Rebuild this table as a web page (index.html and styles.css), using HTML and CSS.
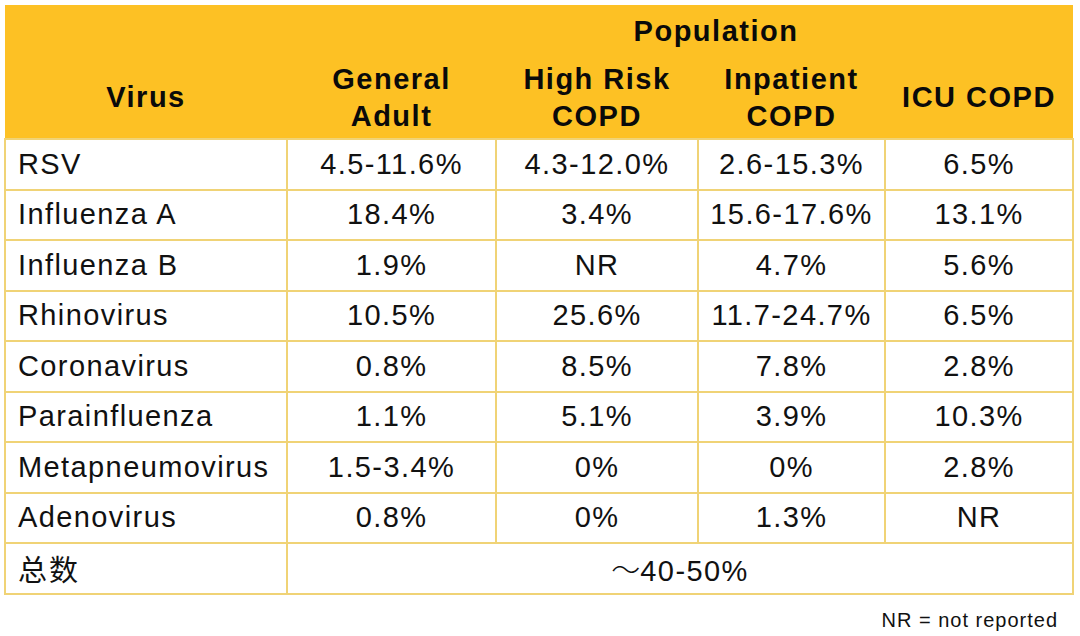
FILE: index.html
```html
<!DOCTYPE html>
<html lang="en">
<head>
<meta charset="utf-8">
<title>Virus prevalence by population</title>
<link rel="stylesheet" href="styles.css">
</head>
<body>
<div class="page">
  <table class="virus-table">
    <colgroup>
      <col class="c1"><col class="c2"><col class="c3"><col class="c4"><col class="c5">
    </colgroup>
    <thead>
      <tr class="hrow1">
        <th></th>
        <th colspan="4" class="pop">Population</th>
      </tr>
      <tr class="hrow2">
        <th>Virus</th>
        <th>General<br>Adult</th>
        <th>High Risk<br>COPD</th>
        <th>Inpatient<br>COPD</th>
        <th>ICU COPD</th>
      </tr>
    </thead>
    <tbody>
      <tr><td class="name">RSV</td><td>4.5-11.6%</td><td>4.3-12.0%</td><td>2.6-15.3%</td><td>6.5%</td></tr>
      <tr><td class="name">Influenza A</td><td>18.4%</td><td>3.4%</td><td>15.6-17.6%</td><td>13.1%</td></tr>
      <tr><td class="name">Influenza B</td><td>1.9%</td><td>NR</td><td>4.7%</td><td>5.6%</td></tr>
      <tr><td class="name">Rhinovirus</td><td>10.5%</td><td>25.6%</td><td>11.7-24.7%</td><td>6.5%</td></tr>
      <tr><td class="name">Coronavirus</td><td>0.8%</td><td>8.5%</td><td>7.8%</td><td>2.8%</td></tr>
      <tr><td class="name">Parainfluenza</td><td>1.1%</td><td>5.1%</td><td>3.9%</td><td>10.3%</td></tr>
      <tr><td class="name">Metapneumovirus</td><td>1.5-3.4%</td><td>0%</td><td>0%</td><td>2.8%</td></tr>
      <tr><td class="name">Adenovirus</td><td>0.8%</td><td>0%</td><td>1.3%</td><td>NR</td></tr>
      <tr><td class="name cjk">总数</td><td colspan="4" class="total"><span class="tilde">～</span>40-50%</td></tr>
    </tbody>
  </table>
  <div class="note">NR = not reported</div>
</div>
</body>
</html>
```
FILE: styles.css
```css
html, body {
  margin: 0;
  padding: 0;
  background: #ffffff;
}

.page {
  width: 1080px;
  height: 636px;
  padding: 5px 0 0 4px;
  box-sizing: border-box;
  font-family: "Liberation Sans", Arial, "Noto Sans CJK SC", sans-serif;
  color: #111111;
}

.virus-table {
  width: 1068px;
  table-layout: fixed;
  border-collapse: collapse;
}

.c1 { width: 282px; }
.c2 { width: 209px; }
.c3 { width: 202px; }
.c4 { width: 187px; }
.c5 { width: 188px; }

.virus-table th {
  background: #fdc124;
  color: #0a0a0a;
  font-weight: bold;
  font-size: 29px;
  line-height: 37px;
  letter-spacing: 1.5px;
  text-align: center;
  vertical-align: middle;
  padding: 0;
  border: none;
}

.hrow1 { height: 52px; }
.hrow2 { height: 82px; }

.virus-table th.pop {
  padding-left: 72px;
}

.virus-table td {
  height: 50.5px;
  padding: 0;
  border: 2px solid #f0d376;
  font-size: 29px;
  letter-spacing: 1.4px;
  text-align: center;
  vertical-align: middle;
  box-sizing: border-box;
}

.virus-table td.name {
  text-align: left;
  padding-left: 12px;
}

.virus-table td.cjk {
  font-family: "Noto Sans CJK SC", sans-serif;
  font-size: 29px;
  letter-spacing: 2px;
}

.tilde {
  font-family: "Noto Sans CJK SC", sans-serif;
  font-weight: 300;
  letter-spacing: 0;
}

.note {
  margin-top: 13px;
  padding-right: 22px;
  text-align: right;
  font-size: 20px;
  line-height: 24px;
  letter-spacing: 1px;
}
```
